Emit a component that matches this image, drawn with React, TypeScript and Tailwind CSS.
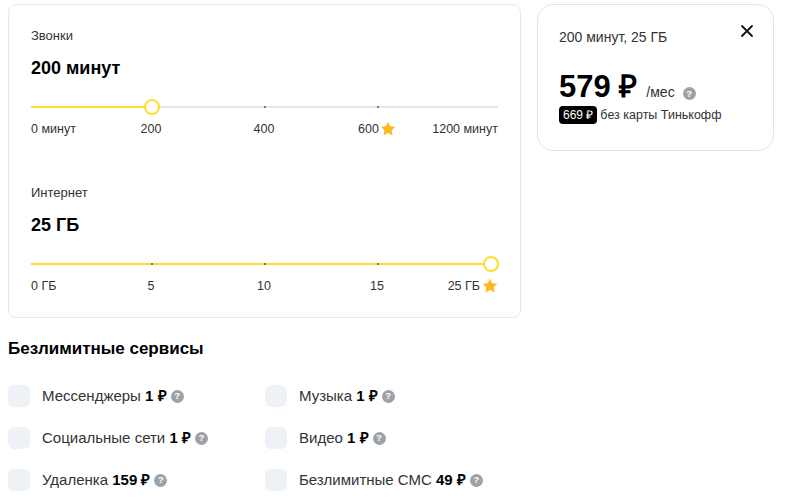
import React from 'react';

const font = { fontFamily: '"Liberation Sans", Arial, sans-serif' };

function Help() {
  return (
    <span className="inline-flex items-center justify-center w-[13px] h-[13px] rounded-full bg-[#9ea2a8] text-white text-[9.5px] font-bold leading-none align-middle">
      ?
    </span>
  );
}

function Star() {
  return (
    <svg width="16" height="16" viewBox="0 0 24 24" className="inline-block">
      <path
        d="M12 2.2l2.95 6.2 6.8.85-5 4.7 1.3 6.75L12 17.4l-6.05 3.3 1.3-6.75-5-4.7 6.8-.85z"
        fill="#ffb71a"
        stroke="#ffb71a"
        strokeWidth="1.2"
        strokeLinejoin="round"
      />
    </svg>
  );
}

interface SliderProps {
  title: string;
  value: string;
  position: number; // 0..1
  labels: React.ReactNode[];
}

function SliderBlock({ title, value, position, labels }: SliderProps) {
  const pct = position * 100;
  return (
    <div>
      <div className="text-[13px] leading-[18px] text-[#333]">{title}</div>
      <div className="mt-[11px] text-[18px] leading-[24px] font-bold text-black">{value}</div>

      {/* track */}
      <div className="relative mt-[19px] h-[16px]">
        <div className="absolute left-0 right-0 top-[7px] h-[2px] bg-[#e6e6e6]" />
        <div
          className="absolute left-0 top-[7px] h-[2px] bg-[#ffdd2d]"
          style={{ width: `calc(${pct}% - ${pct * 0.15}px + 7px)` }}
        />
        {[0.25, 0.5, 0.75].map(t => (
          <div
            key={t}
            className="absolute top-[7px] w-[2px] h-[2px] rounded-full bg-[#555]"
            style={{ left: `calc(${t * 100}% - ${t * 15}px + 7px)` }}
          />
        ))}
        <div
          className="absolute top-0 w-[16px] h-[16px] rounded-full bg-white border-[2.5px] border-[#ffdd2d]"
          style={{ left: `calc(${pct}% - ${pct * 0.15}px - 0.5px)` }}
        />
      </div>

      {/* labels */}
      <div className="relative mt-[6px] h-[16px] text-[12.5px] leading-[16px] text-[#333]">
        <div className="absolute left-0 top-0">{labels[0]}</div>
        {[1, 2, 3].map(i => (
          <div
            key={i}
            className="absolute top-0 -translate-x-1/2 flex items-center whitespace-nowrap"
            style={{ left: `calc(${i * 25}% - ${i * 3.75}px + 7px)` }}
          >
            {labels[i]}
          </div>
        ))}
        <div className="absolute right-0 top-0 flex items-center whitespace-nowrap">{labels[4]}</div>
      </div>
    </div>
  );
}

function Service({ name, price }: { name: string; price: string }) {
  return (
    <div className="flex items-center gap-3 h-[22px]">
      <div className="w-[22px] h-[22px] rounded-[6px] bg-[#eef1f5]" />
      <div className="flex items-center gap-[4px] text-[15px] text-[#333]">
        <span>
          {name} <b className="text-black">{price}</b>
        </span>
        <Help />
      </div>
    </div>
  );
}

export default function App() {
  return (
    <div className="w-[800px] h-[501px] bg-white overflow-hidden pt-[4px] pl-[8px] flex gap-4" style={font}>
      <div className="w-[513px] shrink-0">
        <div className="border border-[#e8e8e8] rounded-[8px] px-[22px] pt-[22px] pb-[23px] flex flex-col gap-[47px]">
          <SliderBlock
            title="Звонки"
            value="200 минут"
            position={0.25}
            labels={[
              '0 минут',
              '200',
              '400',
              <span className="flex items-center gap-[1px]">600 <Star /></span>,
              '1200 минут',
            ]}
          />
          <SliderBlock
            title="Интернет"
            value="25 ГБ"
            position={1}
            labels={[
              '0 ГБ',
              '5',
              '10',
              '15',
              <span className="flex items-center gap-[2px]">25 ГБ <Star /></span>,
            ]}
          />
        </div>

        <h2 className="mt-[19px] text-[17px] leading-[24px] font-bold text-black">Безлимитные сервисы</h2>

        <div className="mt-[24px] grid grid-cols-[257px_1fr] gap-y-[20px]">
          <Service name="Мессенджеры" price="1 ₽" />
          <Service name="Музыка" price="1 ₽" />
          <Service name="Социальные сети" price="1 ₽" />
          <Service name="Видео" price="1 ₽" />
          <Service name="Удаленка" price="159 ₽" />
          <Service name="Безлимитные СМС" price="49 ₽" />
        </div>
      </div>

      <div className="w-[237px] h-[147px] shrink-0 border border-[#e3e3e3] rounded-[16px] px-[21px] pt-[22px] relative">
        <div className="text-[14px] leading-[20px] text-[#333]">200 минут, 25 ГБ</div>
        <button className="absolute right-[18px] top-[18px] w-[16px] h-[16px] flex items-center justify-center">
          <svg width="14" height="14" viewBox="0 0 14 14">
            <path d="M2 2l10 10M12 2L2 12" stroke="#111" strokeWidth="1.8" strokeLinecap="round" />
          </svg>
        </button>
        <div className="mt-[22px] flex items-baseline gap-[9px]">
          <span className="text-[31px] leading-[36px] font-bold text-black">579 ₽</span>
          <span className="text-[14px] text-[#333] flex items-baseline gap-[8px]">
            /мес <Help />
          </span>
        </div>
        <div className="mt-[1px] flex items-center gap-[3px]">
          <span className="bg-black text-white text-[12px] leading-[18px] px-[4px] rounded-[4px]">669 ₽</span>
          <span className="text-[12.5px] text-[#333]">без карты Тинькофф</span>
        </div>
      </div>
    </div>
  );
}
